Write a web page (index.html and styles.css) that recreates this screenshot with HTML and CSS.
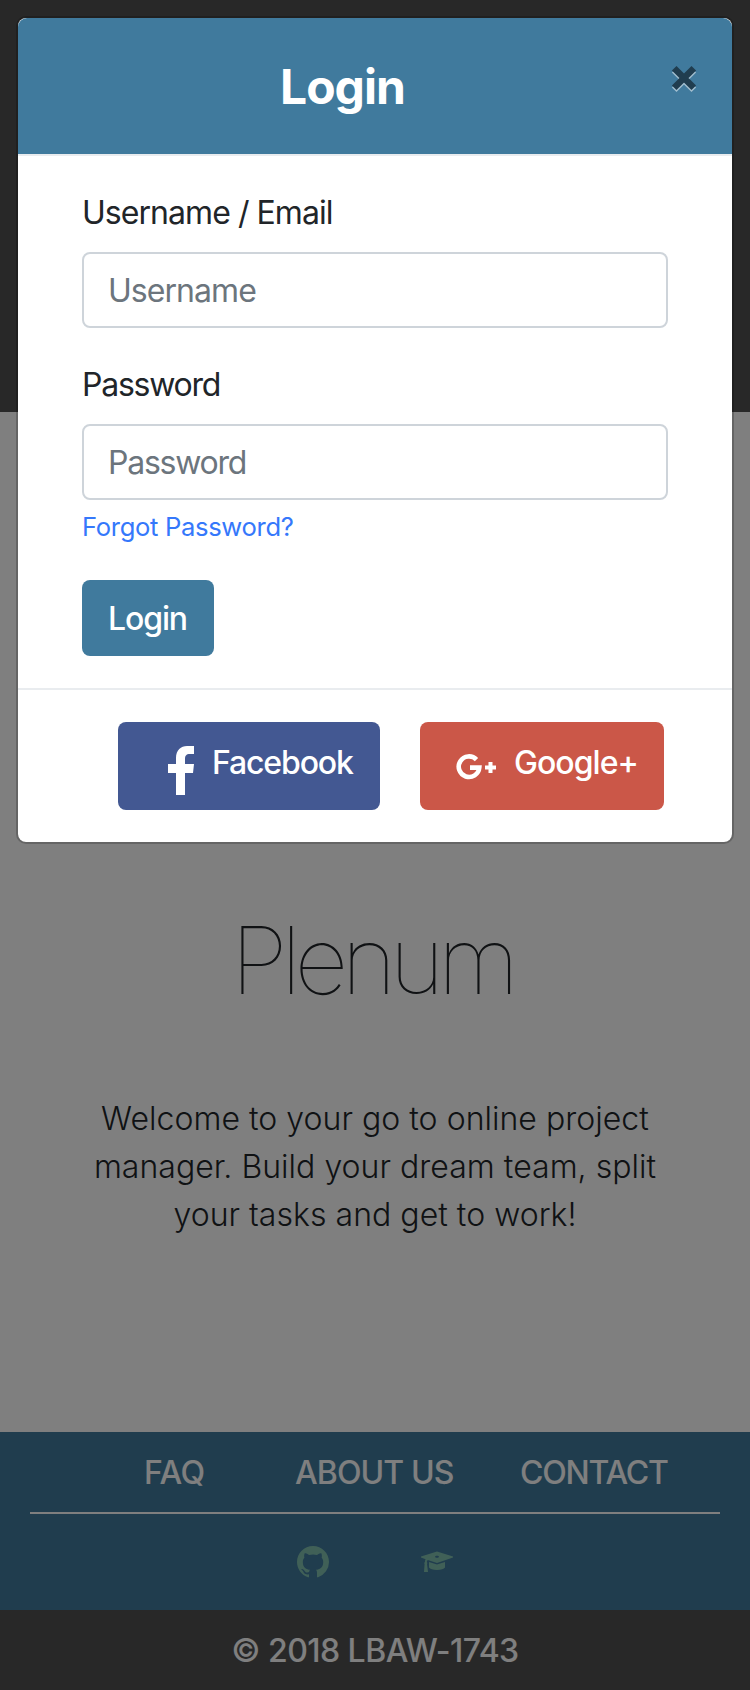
FILE: index.html
```
<!DOCTYPE html>
<html lang="en">
<head>
<meta charset="utf-8">
<title>Plenum</title>
<link rel="stylesheet" href="styles.css">
</head>
<body>
<div class="page">
  <div class="banner"></div>
  <main class="intro">
    <h1 class="brand">Plenum</h1>
    <p class="lead">Welcome to your go to online project<br>manager. Build your dream team, split<br>your tasks and get to work!</p>
  </main>
  <footer class="footer">
    <nav class="links">
      <a class="link faq">FAQ</a>
      <a class="link about">ABOUT US</a>
      <a class="link contact">CONTACT</a>
    </nav>
    <div class="social">
      <svg class="icon" viewBox="0 0 16 16"><path d="M8 0C3.580 0 0 3.580 0 8c0 3.540 2.290 6.530 5.470 7.590H6V14.100c-2.010.37-2.530-.49-2.690-.94-.09-.23-.48-.94-.82-1.130-.28-.15-.68-.52-.01-.53.63-.01 1.080.58 1.230.82.72 1.210 1.870.87 2.330.66.07-.52.28-.87.51-1.070-1.780-.2-3.640-.89-3.640-3.950 0-.87.310-1.590.82-2.150-.08-.2-.36-1.020.08-2.120 0 0 .67-.21 2.200.82.640-.18 1.320-.27 2-.27s1.360.09 2 .27c1.530-1.040 2.200-.82 2.200-.82.44 1.100.16 1.920.08 2.120.51.56.82 1.270.82 2.150 0 3.070-1.870 3.750-3.650 3.950.29.25.54.73.54 1.480V15.590h.54A8.010 8.010 0 0 0 16 8c0-4.420-3.580-8-8-8z"/></svg>
      <svg class="icon" viewBox="0 0 32 32"><path fill-rule="evenodd" d="M16 5.500 32 10.600v.8L16 17 6.800 13.900c-.7.6-1 1.300-1 2.200.6.6.7 1.200.2 2L7 26H3l.6-8c-.5-.8-.4-1.400.3-2 0-1 .2-1.900.7-2.800L0 11.400v-.8zm0 4.200c-1.200 0-2 .5-2 1s.8 1 2 1 2-.5 2-1-.8-1-2-1z"/><path d="M8 16l8 2.600 8-2.600v5.500c-1 1.600-4 2.500-8 2.500s-7-.9-8-2.500z"/></svg>
    </div>
  </footer>
  <div class="copyright"><span>© 2018 LBAW-1743</span></div>
</div>
<div class="backdrop">
  <section class="modal">
    <header class="modal-head">
      <h2 class="title">Login</h2>
      <svg class="close" viewBox="0 0 26 28"><path class="close-shadow" d="M3.200 5.200 22.800 24.800M22.800 5.200 3.200 24.800"/><path class="close-mark" d="M3.200 3.200 22.800 22.800M22.800 3.200 3.200 22.800"/></svg>
    </header>
    <form class="form">
      <label class="label user-label" for="user">Username / Email</label>
      <input class="input user" id="user" placeholder="Username">
      <label class="label pass-label" for="pass">Password</label>
      <input class="input pass" id="pass" type="password" placeholder="Password">
      <a class="forgot">Forgot Password?</a>
      <button class="btn login" type="button">Login</button>
    </form>
    <div class="modal-foot">
      <button class="btn facebook" type="button"><svg class="fb-icon" viewBox="0 0 57 57"><path d="M31 56V34h-8v-9h8v-6C31 11 36 7 42 7h7v8h-4c-4 0-5 2-5 5v5h9l-1 9h-8v22z"/></svg><span>Facebook</span></button>
      <button class="btn google" type="button"><svg class="g-icon" viewBox="0 0 57 57"><path class="g-ring" d="M29.500 20.600A10.300 10.300 0 1 0 32.300 28.600H23"/><path class="g-plus" d="M38 28.500h11M43.500 23v11"/></svg><span>Google+</span></button>
    </div>
  </section>
</div>
</body>
</html>
```
FILE: styles.css
```
* { box-sizing: border-box; }
body { margin: 0; font-family: Inter, "Liberation Sans", sans-serif; font-size: 32px; font-weight: 430; line-height: 48px; color: #212529; }
.page { height: 1690px; display: flex; flex-direction: column; background: #fff; }
.banner { height: 412px; background: #515151; }
.intro { height: 1020px; padding-top: 490px; text-align: center; }
.brand { margin: 0; padding-right: 7px; font-size: 94px; line-height: 116px; font-weight: 140; letter-spacing: -6.800px; }
.lead { margin: 77px 0 0; font-size: 32px; font-weight: 350; letter-spacing: .03px; }
.footer { height: 178px; padding: 17px 30px 0; background: #407a9d; color: #fff; }
.links { display: flex; height: 65px; padding-left: 114px; border-bottom: 2px solid #fff; }
.link { font-size: 32px; font-weight: 500; letter-spacing: -1.200px; }
.faq { width: 151px; letter-spacing: -.5px; }
.about { width: 225px; letter-spacing: -.9px; }
.social { display: flex; gap: 92px; padding: 32px 0 0 267px; }
.icon { width: 32px; height: 32px; fill: #81c1ae; }
.copyright { height: 80px; padding-top: 17px; background: #515151; color: #fff; font-weight: 500; text-align: center; letter-spacing: -.550px; }
.backdrop { position: absolute; left: 0; top: 0; width: 750px; height: 1690px; padding: 16px; background: rgba(0,0,0,.5); }
.modal { width: 718px; height: 828px; border: 2px solid rgba(0,0,0,.2); border-radius: 10px; background: #fff; background-clip: padding-box; }
.modal-head { height: 138px; display: flex; justify-content: space-between; padding: 39px 34px 0 262px; background: #407a9d; border-bottom: 2px solid #e9ecef; border-radius: 9px 9px 0 0; }
.title { margin: 0; color: #fff; font-size: 48px; line-height: 60px; font-weight: 750; letter-spacing: -1px; }
.close { width: 26px; height: 28px; margin-top: 8px; margin-right: 1px; fill: none; stroke-width: 6.500px; }
.close-shadow { stroke: #a0bdce; }
.close-mark { stroke: #203d4f; }
.form { height: 532px; padding: 33px 64px 0; display: flex; flex-direction: column; align-items: flex-start; }
.label { margin-bottom: 15px; height: 48px; letter-spacing: -.95px; }
.pass-label { margin-top: 1px; letter-spacing: -1.250px; }
.input { display: block; width: 586px; height: 76px; padding: 0 24px; border: 2px solid #ced4da; border-radius: 8px; font: 430 32px Inter, sans-serif; letter-spacing: -.95px; background: #fff; }
.input::placeholder { color: #6c757d; opacity: 1; }
.user { margin-bottom: 32px; }
.pass { letter-spacing: -1.250px; }
.forgot { margin-top: 8px; height: 40px; line-height: 38px; font-size: 25.600px; color: #3578fb; letter-spacing: -.33px; }
.btn { border: 0; border-radius: 8px; padding: 0; color: #fff; font: 480 32px/48px Inter, sans-serif; letter-spacing: -1.150px; }
.login { width: 132px; height: 76px; margin-top: 32px; padding: 2px 1px 0 0; background: #407a9d; }
.modal-foot { height: 154px; display: flex; gap: 40px; padding: 32px 0 0 100px; border-top: 2px solid #e9ecef; }
.facebook, .google { height: 88px; display: flex; align-items: flex-start; padding: 17px 0 0 27px; }
.facebook { width: 262px; background: #435892; }
.google { width: 244px; background: #cb5748; letter-spacing: -.95px; }
.fb-icon, .g-icon { width: 57px; height: 57px; fill: #fff; flex: none; }
.fb-icon { margin-right: 10px; }
.g-icon { margin-right: 10px; fill: none; stroke: #fff; }
.g-ring { stroke-width: 4.600px; }
.g-plus { stroke-width: 4px; }
```
